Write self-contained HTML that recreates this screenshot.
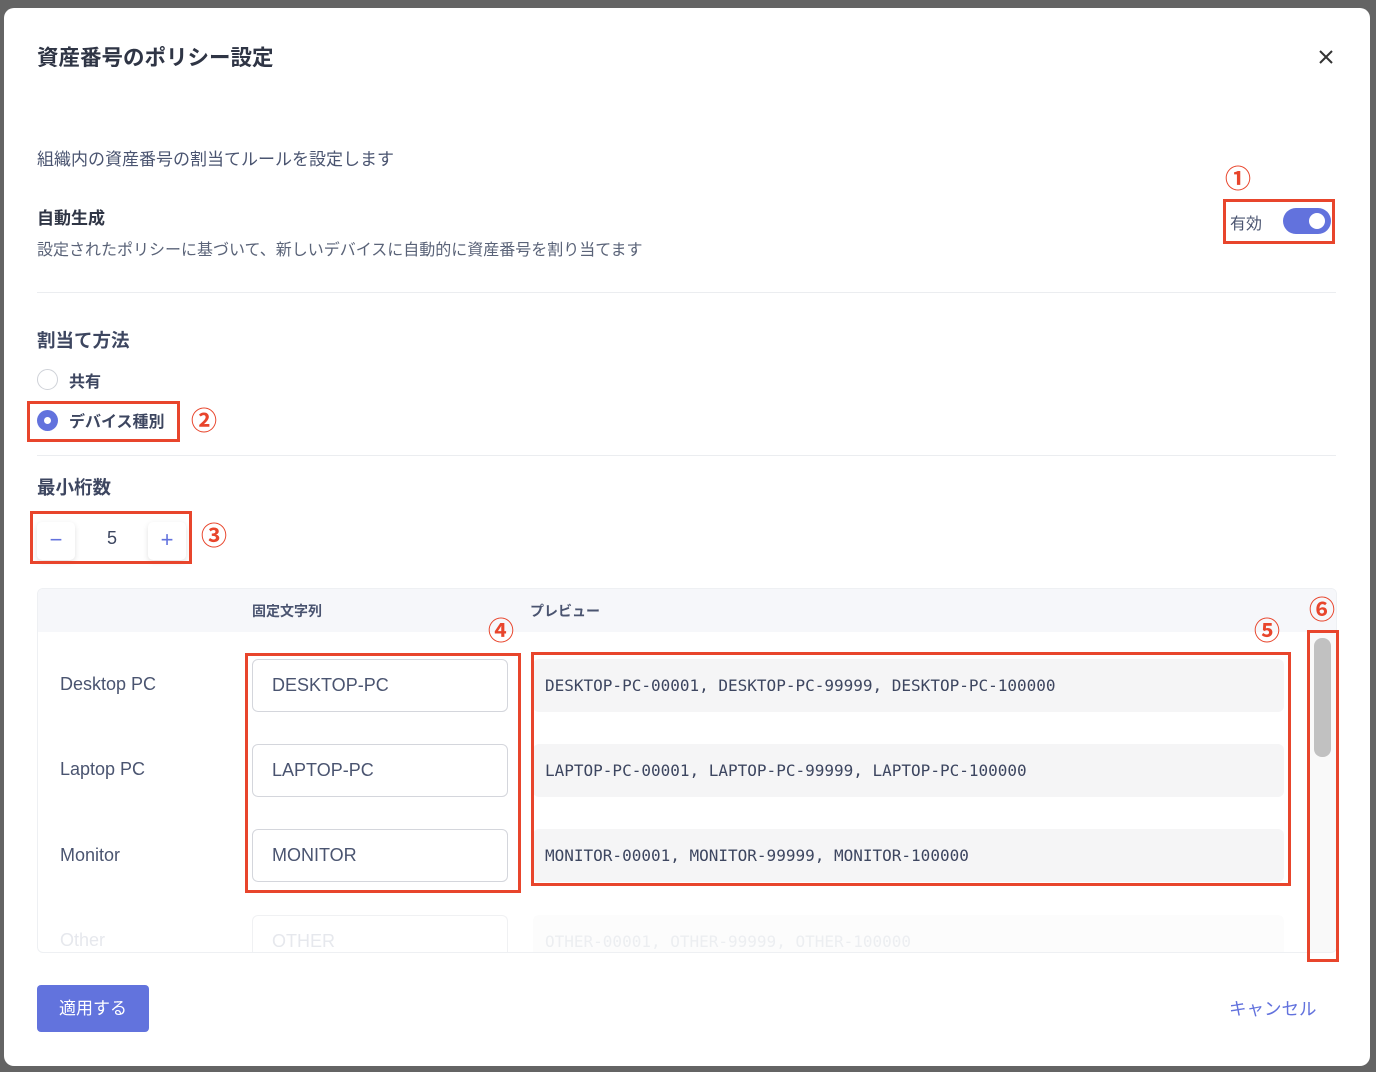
<!DOCTYPE html>
<html><head><meta charset="utf-8"><style>
*{box-sizing:border-box;margin:0;padding:0}
body{width:1376px;height:1072px;background:#646464;position:relative;overflow:hidden;font-family:"Liberation Sans","Noto Sans CJK JP",sans-serif;color:#3d4660}
.a{position:absolute}
.modal{left:4px;top:8px;width:1366px;height:1058px;background:#fff;border-radius:10px}
.red{position:absolute;border:3px solid #e8452c}
.num{position:absolute;color:#e8452c;font-size:26px;line-height:26px;font-weight:bold;font-family:"Noto Sans CJK JP",sans-serif}
.lbl{position:absolute;left:60px;font-size:18px;color:#4a5470}
.inp{position:absolute;left:252px;width:256px;height:53px;border:1px solid #d4d6dc;border-radius:6px;font-size:18px;color:#4a5470;padding-left:19px;line-height:51px}
.pv{position:absolute;left:533px;width:751px;height:53px;background:#f5f5f6;border-radius:6px;font-family:"DejaVu Sans Mono","Liberation Mono",monospace;font-size:16px;color:#3d4660;padding-left:12px;line-height:53px}
.hr{position:absolute;left:37px;width:1299px;height:1px;background:#ebedf0}
</style></head><body>
<div class="a modal"></div>
<div class="a" style="left:37px;top:41px;font-size:21.5px;font-weight:bold;color:#2f3545">資産番号のポリシー設定</div>
<svg class="a" style="left:1318px;top:49px" width="16" height="16" viewBox="0 0 16 16"><path d="M2 2L14 14M14 2L2 14" stroke="#333" stroke-width="2"/></svg>
<div class="a" style="left:37px;top:145px;font-size:17px;color:#4a5470">組織内の資産番号の割当てルールを設定します</div>
<div class="a" style="left:37px;top:204px;font-size:17px;font-weight:bold;color:#2f3545">自動生成</div>
<div class="a" style="left:37px;top:236px;font-size:16px;color:#5a6378">設定されたポリシーに基づいて、新しいデバイスに自動的に資産番号を割り当てます</div>
<div class="num" style="left:1225px;top:165px">①</div>
<div class="red" style="left:1223px;top:199px;width:112px;height:45px"></div>
<div class="a" style="left:1230px;top:210px;font-size:16px;color:#4a5470">有効</div>
<div class="a" style="left:1283px;top:208px;width:48px;height:26px;border-radius:13px;background:#6272dd"></div>
<div class="a" style="left:1309px;top:213px;width:16px;height:16px;border-radius:8px;background:#fff"></div>
<div class="hr" style="top:292px"></div>
<div class="a" style="left:37px;top:327px;font-size:18.5px;font-weight:bold;color:#3d4660">割当て方法</div>
<div class="a" style="left:37px;top:369px;width:21px;height:21px;border-radius:50%;border:1px solid #cfd2d8"></div>
<div class="a" style="left:69px;top:368px;font-size:16px;font-weight:bold;color:#3d4660">共有</div>
<div class="a" style="left:37px;top:410px;width:21px;height:21px;border-radius:50%;background:#6272dd"></div>
<div class="a" style="left:44px;top:417px;width:7px;height:7px;border-radius:50%;background:#fff"></div>
<div class="a" style="left:69px;top:408px;font-size:16px;font-weight:bold;color:#3d4660">デバイス種別</div>
<div class="red" style="left:27px;top:401px;width:153px;height:41px"></div>
<div class="num" style="left:191px;top:407px">②</div>
<div class="hr" style="top:455px"></div>
<div class="a" style="left:37px;top:474px;font-size:18.5px;font-weight:bold;color:#3d4660">最小桁数</div>
<div class="a" style="left:37px;top:522px;width:38px;height:38px;border-radius:5px;background:#fff;box-shadow:0 2px 6px rgba(0,0,0,.12);color:#6272dd;font-size:22px;text-align:center;line-height:36px">−</div>
<div class="a" style="left:100px;top:528px;width:24px;text-align:center;font-size:18px;color:#3d4660">5</div>
<div class="a" style="left:148px;top:522px;width:38px;height:38px;border-radius:5px;background:#fff;box-shadow:0 2px 6px rgba(0,0,0,.12);color:#6272dd;font-size:22px;text-align:center;line-height:36px">+</div>
<div class="red" style="left:30px;top:511px;width:162px;height:53px"></div>
<div class="num" style="left:201px;top:522px">③</div>
<div class="a" style="left:37px;top:588px;width:1300px;height:365px;border:1px solid #eef0f3;border-radius:6px;overflow:hidden">
<div class="a" style="left:0;top:0;width:1300px;height:43px;background:#f6f7fa"></div>
<div class="a" style="left:1270px;top:43px;width:30px;height:322px;background:#f9f9f9"></div>
<div class="a" style="left:1276px;top:49px;width:17px;height:119px;border-radius:8px;background:#c1c1c1"></div>
</div>
<div class="a" style="left:252px;top:601px;font-size:14px;font-weight:bold;color:#4a5470">固定文字列</div>
<div class="a" style="left:530px;top:601px;font-size:14px;font-weight:bold;color:#4a5470">プレビュー</div>
<div class="lbl" style="top:674px">Desktop PC</div>
<div class="lbl" style="top:759px">Laptop PC</div>
<div class="lbl" style="top:845px">Monitor</div>
<div class="lbl" style="top:930px;color:#e6e8ed;height:20px;overflow:hidden">Other</div>
<div class="inp" style="top:659px">DESKTOP-PC</div>
<div class="inp" style="top:744px">LAPTOP-PC</div>
<div class="inp" style="top:829px">MONITOR</div>
<div class="inp" style="top:915px;height:37px;border-bottom:none;border-radius:6px 6px 0 0;border-color:#f0f1f3;color:#e6e8ed;line-height:51px;overflow:hidden">OTHER</div>
<div class="pv" style="top:659px">DESKTOP-PC-00001, DESKTOP-PC-99999, DESKTOP-PC-100000</div>
<div class="pv" style="top:744px">LAPTOP-PC-00001, LAPTOP-PC-99999, LAPTOP-PC-100000</div>
<div class="pv" style="top:829px">MONITOR-00001, MONITOR-99999, MONITOR-100000</div>
<div class="pv" style="top:915px;height:37px;background:#fcfcfc;color:#eceef1;overflow:hidden;border-radius:6px 6px 0 0">OTHER-00001, OTHER-99999, OTHER-100000</div>
<div class="red" style="left:245px;top:653px;width:276px;height:240px"></div>
<div class="num" style="left:488px;top:617px">④</div>
<div class="red" style="left:531px;top:652px;width:760px;height:234px"></div>
<div class="num" style="left:1254px;top:617px">⑤</div>
<div class="red" style="left:1307px;top:630px;width:32px;height:332px"></div>
<div class="num" style="left:1309px;top:596px">⑥</div>
<div class="a" style="left:37px;top:985px;width:112px;height:47px;border-radius:4px;background:#6273dd;color:#fff;font-size:17px;text-align:center;line-height:47px">適用する</div>
<div class="a" style="left:1229px;top:996px;font-size:17.5px;color:#6272dd">キャンセル</div>
</body></html>
